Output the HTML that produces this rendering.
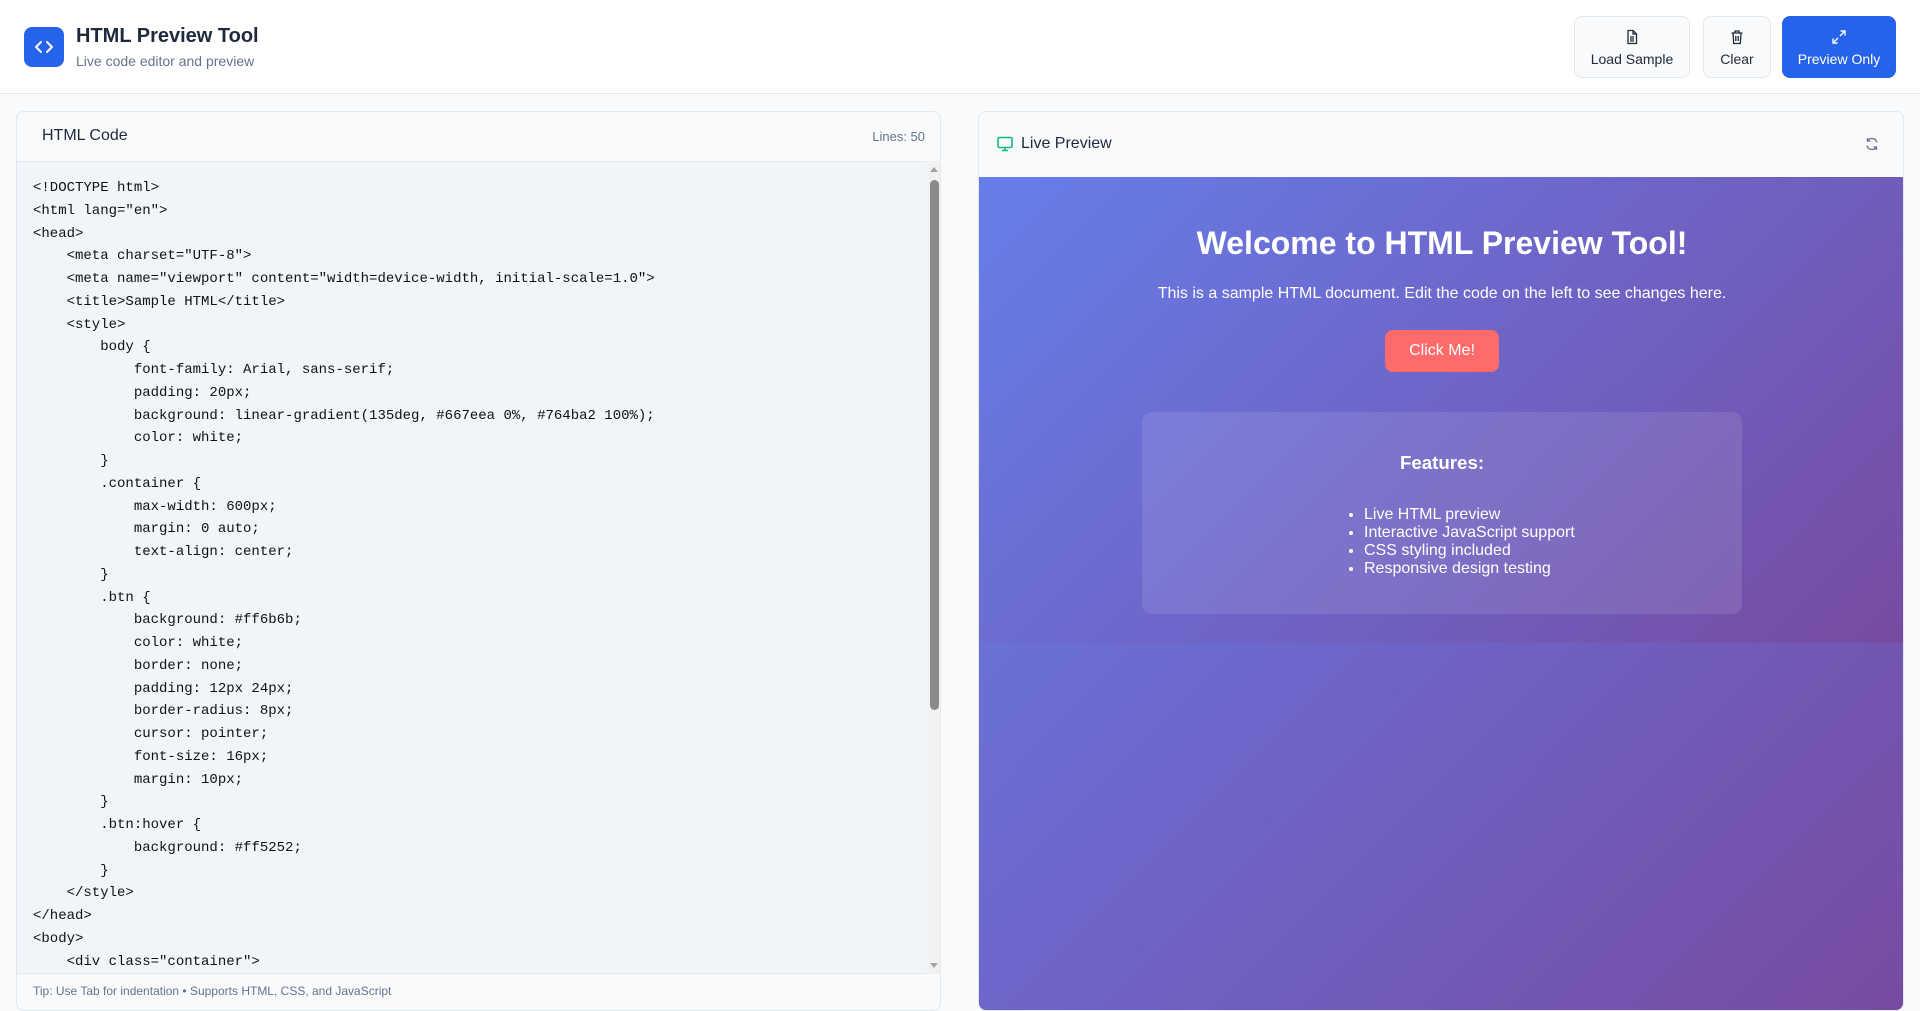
<!DOCTYPE html>
<html><head><meta charset="utf-8"><style>
*{box-sizing:border-box;margin:0;padding:0}
body{width:1920px;height:993px;overflow:hidden;background:#f8fafc;font-family:"Liberation Sans",sans-serif;position:relative}
.hdr{position:absolute;left:0;top:0;width:1920px;height:94px;background:#fff;border-bottom:1px solid #e2e8f0}
.logo{position:absolute;left:24px;top:27px;width:40px;height:40px;border-radius:8px;background:#2563eb}
.t1{position:absolute;left:76px;top:25px;font-size:20px;font-weight:bold;color:#1e293b}
.t2{position:absolute;left:76px;top:53px;font-size:14px;color:#64748b}
.btn{position:absolute;top:16px;height:62px;border:1px solid #e2e8f0;background:#f8fafc;border-radius:8px;font-size:14px;color:#1e293b;text-align:center}
.btn svg{position:absolute;left:50%;top:12px;margin-left:-8px}
.btn span{position:absolute;left:0;right:0;top:34px}
.panel{position:absolute;top:111px;border:1px solid #e2e8f0;border-radius:8px;background:#f8fafc;overflow:hidden}
.code{position:absolute;left:0;top:49px;width:910px;height:813px;background:#f1f4f8;border-top:1px solid #e2e8f0;border-bottom:1px solid #e2e8f0;overflow:hidden}
pre{position:absolute;left:16px;top:15px;font-family:"Liberation Mono",monospace;font-size:14px;line-height:22.75px;color:#111}
.sb{position:absolute;left:910px;top:49px;width:14px;height:813px;background:#f1f1f1}
.grad{background:linear-gradient(135deg,#667eea 0%,#764ba2 100%)}
</style></head><body>
<div class="hdr">
<div class="logo"><svg width="40" height="40" viewBox="0 0 40 40"><path d="M17 15l-5 5 5 5M23 15l5 5-5 5" stroke="#fff" stroke-width="2" fill="none" stroke-linecap="round" stroke-linejoin="round"/></svg></div>
<div class="t1">HTML Preview Tool</div>
<div class="t2">Live code editor and preview</div>
<div class="btn" style="left:1574px;width:116px"><svg width="16" height="16" viewBox="0 0 16 16"><path d="M4 1.5h5l3.5 3.5v9.5h-8.5zM9 1.5v3.5h3.5M6 8h4M6 10h4M6 12h4" stroke="#1e293b" stroke-width="1.3" fill="none"/></svg><span>Load Sample</span></div>
<div class="btn" style="left:1703px;width:68px"><svg width="16" height="16" viewBox="0 0 16 16"><path d="M2.5 4h11M6 4V2h4v2M4 4l.7 10.5h6.6L12 4M6.8 7v5M9.2 7v5" stroke="#1e293b" stroke-width="1.3" fill="none"/></svg><span>Clear</span></div>
<div class="btn" style="left:1782px;width:114px;background:#2563eb;border-color:#2563eb;color:#fff"><svg width="16" height="16" viewBox="0 0 16 16"><path d="M9.5 2h4.5v4.5M14 2l-5 5M6.5 14H2V9.5M2 14l5-5" stroke="#fff" stroke-width="1.4" fill="none"/></svg><span>Preview Only</span></div>
</div>

<div class="panel" style="left:16px;width:925px;height:900px">
<div style="position:absolute;left:25px;top:15px;font-size:16px;color:#1e293b">HTML Code</div>
<div style="position:absolute;right:15px;top:17px;font-size:13px;color:#64748b">Lines: 50</div>
<div class="code"><pre>&lt;!DOCTYPE html&gt;
&lt;html lang="en"&gt;
&lt;head&gt;
    &lt;meta charset="UTF-8"&gt;
    &lt;meta name="viewport" content="width=device-width, initial-scale=1.0"&gt;
    &lt;title&gt;Sample HTML&lt;/title&gt;
    &lt;style&gt;
        body {
            font-family: Arial, sans-serif;
            padding: 20px;
            background: linear-gradient(135deg, #667eea 0%, #764ba2 100%);
            color: white;
        }
        .container {
            max-width: 600px;
            margin: 0 auto;
            text-align: center;
        }
        .btn {
            background: #ff6b6b;
            color: white;
            border: none;
            padding: 12px 24px;
            border-radius: 8px;
            cursor: pointer;
            font-size: 16px;
            margin: 10px;
        }
        .btn:hover {
            background: #ff5252;
        }
    &lt;/style&gt;
&lt;/head&gt;
&lt;body&gt;
    &lt;div class="container"&gt;</pre></div>
<div class="sb"><div style="position:absolute;left:3px;top:6px;width:0;height:0;border-left:4px solid transparent;border-right:4px solid transparent;border-bottom:5px solid #a3a3a3"></div><div style="position:absolute;left:3px;top:19px;width:9px;height:530px;border-radius:5px;background:#8a8a8a"></div><div style="position:absolute;left:3px;bottom:6px;width:0;height:0;border-left:4px solid transparent;border-right:4px solid transparent;border-top:5px solid #a3a3a3"></div></div>
<div style="position:absolute;left:16px;top:872px;font-size:12px;color:#64748b">Tip: Use Tab for indentation • Supports HTML, CSS, and JavaScript</div>
</div>

<div class="panel" style="left:978px;width:926px;height:900px">
<svg style="position:absolute;left:17px;top:23px" width="18" height="18" viewBox="0 0 18 18"><rect x="2" y="2.5" width="14" height="10" rx="1.5" stroke="#10b981" stroke-width="1.6" fill="none"/><path d="M6 15.5h6M9 12.5v3" stroke="#10b981" stroke-width="1.6"/></svg>
<div style="position:absolute;left:42px;top:23px;font-size:16px;color:#1e293b">Live Preview</div>
<svg style="position:absolute;left:885px;top:24px" width="16" height="16" viewBox="0 0 16 16"><path d="M13 6.5A5.2 5.2 0 0 0 3.5 5M3 9.5A5.2 5.2 0 0 0 12.5 11M3.5 2v3h3M12.5 14v-3h-3" stroke="#64748b" stroke-width="1.3" fill="none"/></svg>
<div class="grad" style="position:absolute;left:0;top:65px;width:926px;height:835px"></div>
<div class="grad" style="position:absolute;left:0;top:65px;width:926px;height:466px;color:#fff;text-align:center">
<div style="position:absolute;left:0;right:0;top:48px;font-size:32px;font-weight:bold">Welcome to HTML Preview Tool!</div>
<div style="position:absolute;left:0;right:0;top:108px;font-size:16px">This is a sample HTML document. Edit the code on the left to see changes here.</div>
<div style="position:absolute;left:406px;top:153px;width:114px;height:42px;background:#ff6b6b;border-radius:8px;font-size:16px;line-height:42px">Click Me!</div>
<div style="position:absolute;left:163px;top:235px;width:600px;height:202px;background:rgba(255,255,255,0.1);border-radius:10px">
<div style="position:absolute;left:0;right:0;top:40px;font-size:18.7px;font-weight:bold">Features:</div>
<ul style="position:absolute;left:222px;top:94px;text-align:left;font-size:16px;line-height:18px;list-style:disc;white-space:nowrap">
<li>Live HTML preview</li><li>Interactive JavaScript support</li><li>CSS styling included</li><li>Responsive design testing</li></ul>
</div></div>
</div>
</body></html>
